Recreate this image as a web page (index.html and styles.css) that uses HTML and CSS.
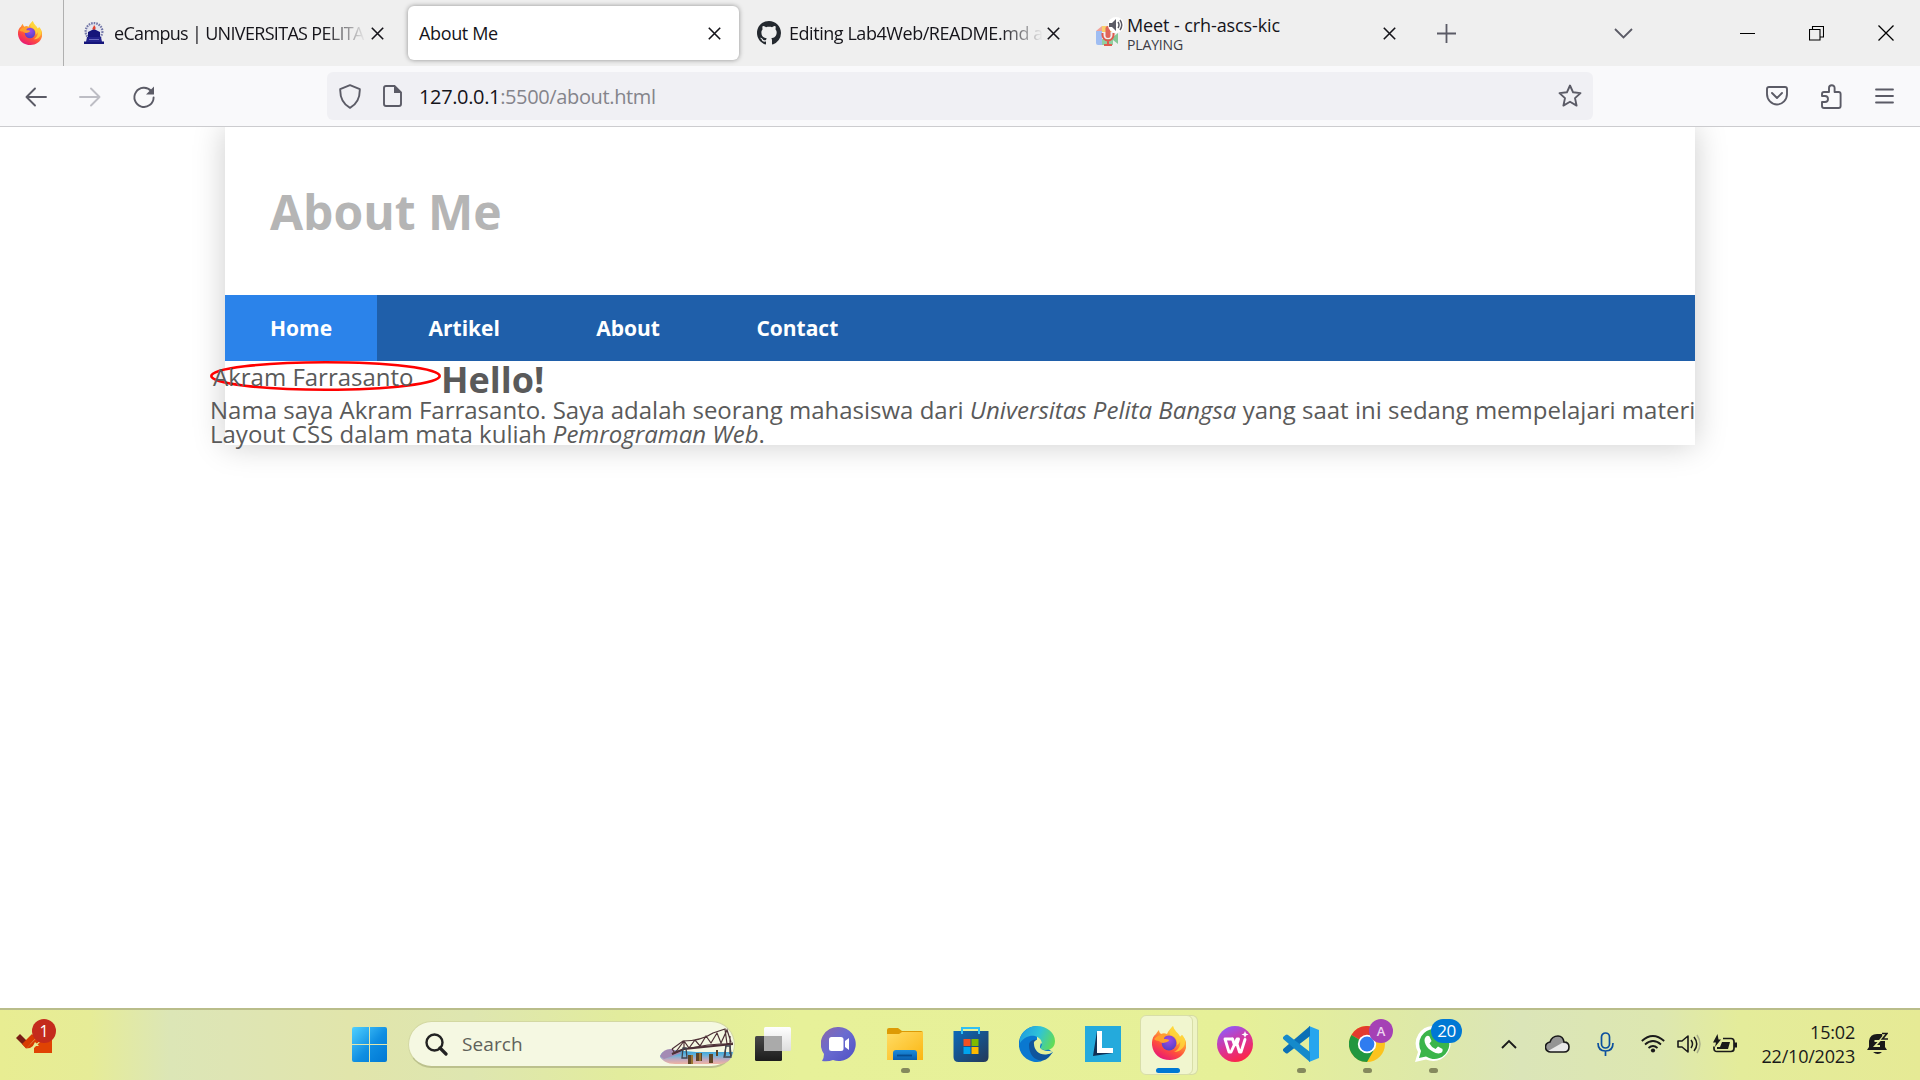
FILE: index.html
```html
<!DOCTYPE html>
<html lang="id">
<head>
<meta charset="utf-8">
<title>About Me</title>
<link rel="stylesheet" href="styles.css">
</head>
<body>
<svg width="0" height="0" class="defs" aria-hidden="true">
  <defs>
    <linearGradient id="ffBody" x1=".8" y1="0" x2=".25" y2="1"><stop offset="0" stop-color="#fff44f"/><stop offset=".35" stop-color="#ffa436"/><stop offset=".65" stop-color="#ff4f3c"/><stop offset="1" stop-color="#e6127c"/></linearGradient>
    <radialGradient id="ffGlobe" cx=".5" cy=".3" r=".8"><stop offset="0" stop-color="#a04be8"/><stop offset="1" stop-color="#4a3fc0"/></radialGradient>
    <symbol id="firefox" viewBox="0 0 34 34">
      <path d="M4 8C5 6 6 5 7 4c0 2 1 3 2 4 2-1 4-1 6 0C16 5 19 2 21 0c1 5 5 7 7 11l2-2c4 5 5 8 4 13-2 8-9 12-16 12C8 34 1 28 0 19-.3 14 1 10 4 8z" fill="url(#ffBody)"/>
      <circle cx="17" cy="17" r="7.400" fill="url(#ffGlobe)"/>
      <path d="M2 13c3-4 8-5 12-4-1 1-2 2-2 4 2 0 4 0 5 1 0 2-3 2-6 3-1 0-3-1-4-2-2 0-4-1-5-2z" fill="#ffa02c"/>
      <path d="M21 0c-3 3-4 6-3 9 5 1 8 5 7 10 2-1 3-3 3-4 1 5-2 9-6 11 7 0 12-6 11-12-1-3-2-4-3-5l-2 2c-1-4-6-6-7-11z" fill="#ffd83b" opacity=".8"/>
    </symbol>
    <symbol id="x" viewBox="0 0 13 13"><path d="M.8.8l11.4 11.4M12.2.8L.8 12.2" fill="none" stroke="#15141a" stroke-width="1.600"/></symbol>
    <linearGradient id="win" x1="0" y1="0" x2="1" y2="1"><stop offset="0" stop-color="#4fd0ff"/><stop offset=".55" stop-color="#0f8ee2"/><stop offset="1" stop-color="#0078d4"/></linearGradient>
    <linearGradient id="chat" x1="0" y1="0" x2="1" y2="1"><stop offset="0" stop-color="#8b67a8"/><stop offset=".45" stop-color="#6a6bd0"/><stop offset="1" stop-color="#4f50c4"/></linearGradient>
    <linearGradient id="folder" x1="0" y1="0" x2="1" y2="1"><stop offset="0" stop-color="#ffdc65"/><stop offset="1" stop-color="#fbb612"/></linearGradient>
    <linearGradient id="blue" x1="0" y1="0" x2="0" y2="1"><stop offset="0" stop-color="#1a8bdc"/><stop offset="1" stop-color="#0b5fae"/></linearGradient>
    <linearGradient id="store" x1="0" y1="0" x2="1" y2="1"><stop offset="0" stop-color="#0b6ab9"/><stop offset="1" stop-color="#253858"/></linearGradient>
    <linearGradient id="edgeTop" x1="0" y1=".3" x2="1" y2=".6"><stop offset="0" stop-color="#1f9ee0"/><stop offset=".5" stop-color="#2fc3d8"/><stop offset="1" stop-color="#62dc55"/></linearGradient>
    <linearGradient id="wps" x1=".2" y1="0" x2=".7" y2="1"><stop offset="0" stop-color="#8a5cff"/><stop offset=".5" stop-color="#d8349c"/><stop offset="1" stop-color="#ff2540"/></linearGradient>
    <linearGradient id="dark" x1="0" y1="0" x2="0" y2="1"><stop offset="0" stop-color="#484848"/><stop offset="1" stop-color="#1c1c1c"/></linearGradient>
    <linearGradient id="pane" x1="0" y1="0" x2="0" y2="1"><stop offset="0" stop-color="#fff"/><stop offset="1" stop-color="#dedede"/></linearGradient>
    <linearGradient id="river" x1="0" y1="0" x2="0" y2="1"><stop offset="0" stop-color="#2e9fd4"/><stop offset=".35" stop-color="#62b2dc"/><stop offset=".7" stop-color="#c5a9bd"/><stop offset="1" stop-color="#efb3a2"/></linearGradient>
  </defs>
</svg>

<header class="browser">
  <div class="tabbar">
    <div class="view-btn"><svg width="24" height="28"><use href="#firefox"/></svg></div>
    <div class="tab tab-campus">
      <svg width="22" height="22" viewBox="0 0 22 22"><circle cx="11" cy="9.500" r="8.400" fill="#e3e4ee" stroke="#7478a8" stroke-width="2.200" stroke-dasharray="1.600 1"/><path d="M5 10l6-3 6 3v6H5zM1 19.500h20V22H1z" fill="#15157a"/><path d="M4 15h14l1 5H3z" fill="#22228c"/><path d="M9.500 7.500C9 5.500 11 5 11 3c1.600 1.500 2 3 1.200 4.500z" fill="#e5402c"/><path d="M6 17.500h10" stroke="#6a6ac0"/></svg>
      <span class="tab-label faded">eCampus | UNIVERSITAS PELITA</span>
      <svg class="close" width="13" height="13"><use href="#x"/></svg>
    </div>
    <div class="tab tab-active">
      <span class="tab-label">About Me</span>
      <svg class="close" width="13" height="13"><use href="#x"/></svg>
    </div>
    <div class="tab tab-github">
      <svg width="24" height="24" viewBox="0 0 16 16"><path fill="#24292f" d="M8 0C3.580 0 0 3.580 0 8c0 3.540 2.290 6.530 5.470 7.590.4.070.55-.17.55-.38 0-.19-.01-.82-.01-1.490-2.010.37-2.530-.49-2.690-.94-.09-.23-.48-.94-.82-1.130-.28-.15-.68-.52-.01-.53.63-.01 1.080.58 1.230.82.72 1.210 1.870.87 2.330.66.07-.52.28-.87.51-1.070-1.780-.2-3.640-.89-3.640-3.950 0-.87.31-1.590.82-2.150-.08-.2-.36-1.020.08-2.120 0 0 .67-.21 2.200.82.64-.18 1.320-.27 2-.27s1.360.09 2 .27c1.530-1.040 2.200-.82 2.200-.82.44 1.100.16 1.920.08 2.120.51.56.82 1.270.82 2.150 0 3.070-1.870 3.750-3.650 3.950.29.25.54.73.54 1.480 0 1.070-.01 1.930-.01 2.200 0 .21.15.46.55.38A8.010 8.010 0 0 0 16 8c0-4.420-3.580-8-8-8z"/></svg>
      <span class="tab-label faded">Editing Lab4Web/README.md a</span>
      <svg class="close" width="13" height="13"><use href="#x"/></svg>
    </div>
    <div class="tab tab-meet">
      <svg width="28" height="34" viewBox="0 0 28 34"><path d="M0 15l6-5v8H0z" fill="#f0a198"/><path d="M6 10h11v6H6z" fill="#f8cf6c"/><path d="M0 15h6v14H2q-2 0-2-2z" fill="#9fbdf2"/><path d="M6 23h11v6H6z" fill="#91cf9f"/><path d="M17 21l5-4v11l-5-4z" fill="#84c796"/><path d="M6.500 17v2a5.500 5.500 0 0 0 11 0v-2M12 25v4M8 29h8" fill="none" stroke="#df5b4e" stroke-width="2"/><rect x="9.500" y="10" width="5" height="12" rx="2.500" fill="#e0655a"/><circle cx="20" cy="9" r="8" fill="#fff"/><path d="M13 7h3l4-4v12l-4-4h-3z" fill="#5b5b66"/><path d="M22 6q2 3 0 6M24 4q3.500 5 0 10" fill="none" stroke="#5b5b66" stroke-width="1.500"/></svg>
      <span class="tab-stack"><span class="tab-title">Meet - crh-ascs-kic</span><span class="playing">PLAYING</span></span>
      <svg class="close" width="13" height="13"><use href="#x"/></svg>
    </div>
    <svg class="new-tab" width="19" height="19" viewBox="0 0 19 19"><path d="M9.500 0v19M0 9.500h19" stroke="#5b5b66" stroke-width="1.800"/></svg>
    <svg class="all-tabs" width="19" height="11" viewBox="0 0 19 11"><path d="M1 1l8.500 8.500L18 1" fill="none" stroke="#5b5b66" stroke-width="1.800"/></svg>
    <div class="win-controls">
      <svg width="15" height="15"><path d="M0 7.500h15" stroke="#000"/></svg>
      <svg width="15" height="15"><path d="M.5 3.500h10.500v10.500H.5zM3.500 3.500V.5h11v10.500H11" fill="none" stroke="#000" stroke-width="1.100"/></svg>
      <svg width="16" height="16"><path d="M.5.5l15 15M15.500.5l-15 15" stroke="#000" stroke-width="1.300"/></svg>
    </div>
  </div>
  <div class="navbar">
    <div class="nav-buttons">
      <svg width="22" height="20" viewBox="0 0 22 20"><path d="M21 10H1.500M10 1.500L1.500 10l8.500 8.500" fill="none" stroke="#5b5b66" stroke-width="1.900" stroke-linecap="round" stroke-linejoin="round"/></svg>
      <svg width="22" height="20" viewBox="0 0 22 20"><path d="M1 10h19.500M12 1.500l8.500 8.500-8.500 8.500" fill="none" stroke="#bdbdc4" stroke-width="1.900" stroke-linecap="round" stroke-linejoin="round"/></svg>
      <svg width="24" height="24" viewBox="0 0 24 24"><path d="M19.200 6A9.600 9.600 0 1 0 21.600 12.500" fill="none" stroke="#5b5b66" stroke-width="1.900" stroke-linecap="round"/><path d="M22 1.500v8h-8z" fill="#5b5b66"/></svg>
    </div>
    <div class="urlbar">
      <svg width="22" height="25" viewBox="0 0 22 25"><path d="M11 1.200l9.800 4C21 14 18 20 11 23.800 4 20 1 14 1.200 5.200z" fill="none" stroke="#5b5b66" stroke-width="1.900" stroke-linejoin="round"/></svg>
      <svg class="page-icon" width="19" height="22" viewBox="0 0 19 22"><path d="M3 1h8.500L18 7.500V19q0 2-2 2H3q-2 0-2-2V3q0-2 2-2z" fill="none" stroke="#5b5b66" stroke-width="1.900"/><path d="M11 1v7h7z" fill="#5b5b66"/></svg>
      <span class="url"><b>127.0.0.1</b>:5500/about.html</span>
      <svg class="star" width="24" height="24" viewBox="0 0 24 24"><path d="M12 1.500l3.100 6.800 7.400.8-5.500 5 1.600 7.500-6.600-3.800-6.600 3.800L7 14.100l-5.500-5 7.400-.8z" fill="none" stroke="#5b5b66" stroke-width="1.900" stroke-linejoin="round"/></svg>
    </div>
    <div class="nav-tools">
      <svg width="22" height="20" viewBox="0 0 22 20"><path d="M3 1h16q2 0 2 2v5a10 10.500 0 0 1-20 0V3q0-2 2-2zM6 7l5 5 5-5" fill="none" stroke="#5b5b66" stroke-width="1.900" stroke-linecap="round" stroke-linejoin="round"/></svg>
      <svg width="21" height="25" viewBox="0 0 21 25"><path d="M8 8V4a2.800 2.800 0 0 1 5.600 0v4h4q2 0 2 2v12q0 2-2 2H3q-2 0-2-2v-4h3a3 3 0 0 0 0-6H1v-2q0-2 2-2z" fill="none" stroke="#5b5b66" stroke-width="1.900" stroke-linejoin="round"/></svg>
      <svg width="19" height="16" viewBox="0 0 19 16"><path d="M1 1.500h17M1 8h17M1 14.500h17" stroke="#5b5b66" stroke-width="1.800" stroke-linecap="round"/></svg>
    </div>
  </div>
</header>

<main class="viewport">
  <div class="container">
    <div class="site-head"><h1>About Me</h1></div>
    <nav class="site-nav"><a class="active">Home</a><a>Artikel</a><a>About</a><a>Contact</a></nav>
    <section class="about">
      <div class="intro">
        <div class="name"><svg width="231" height="30" viewBox="0 0 231 30"><ellipse cx="115.500" cy="15" rx="114.200" ry="13.700" fill="none" stroke="#f00" stroke-width="2.600"/></svg><span>Akram Farrasanto</span></div>
        <h2>Hello!</h2>
      </div>
      <p>Nama saya Akram Farrasanto. Saya adalah seorang mahasiswa dari <em>Universitas Pelita Bangsa</em> yang saat ini sedang mempelajari materi<br>Layout CSS dalam mata kuliah <em>Pemrograman Web</em>.</p>
    </section>
  </div>
</main>

<footer class="taskbar">
  <div class="widget">
    <svg width="36" height="22" viewBox="0 0 36 22"><path d="M0 6l4-4 10 10-4 4z" fill="#7a1d14"/><path d="M10 16.500L24 2.500l4 4L14 16z" fill="#d83b01"/><path d="M6 12l4 4.500L20 6l-4-4z" fill="#d83b01"/><path d="M18 2l7 7-7 7v5h18V4H22z" fill="#e04303"/><path d="M19 10l4 4h-6z" fill="#e6eb94"/></svg>
    <span class="badge badge-red">1</span>
  </div>
  <div class="start"><svg width="35" height="35"><path d="M2 0h15v17H0V2q0-2 2-2zM18 0h15q2 0 2 2v15H18zM0 18h17v17H2q-2 0-2-2zM18 18h17v15q0 2-2 2H18z" fill="url(#win)"/></svg></div>
  <div class="search">
    <svg width="23" height="23" viewBox="0 0 23 23"><circle cx="9.500" cy="9.500" r="8" fill="none" stroke="#222" stroke-width="2.400"/><path d="M15 15l6 6" stroke="#222" stroke-width="3.200" stroke-linecap="round"/></svg>
    <span>Search</span>
    <svg class="bridge" width="74" height="37" viewBox="0 0 74 37"><path d="M0 29C1 24 5 22 12 22l24 2h37c-1 7-6 12-13 12H15C7 36 3 33 0 29z" fill="url(#river)"/><path d="M0 28q4-8 12-7l10 4-18 6z" fill="#a38bb4"/><path d="M12 26l12-5 24-4 25-2M12 21l11-8q18 0 30-8L65 1l2 15M24 21v-8M12 21l3 4 9-12 5 7 6-8 5 6 6-10 5 7 6-10 4 10 6-13 4 12M70 8v18M66 16l-1 12M70 16l1 12" fill="none" stroke="#4d3036" stroke-width="1.200"/><path d="M12 26l12-5 49-5" fill="none" stroke="#4d3036" stroke-width="2"/><path d="M23 20l-1 10h5l-1-10zM66 18l-2 11h7l-1-11z" fill="none" stroke="#3f4550" stroke-width="1.300"/><path d="M28 27h5v9h-5zM36 25h6v8h-6zM49 26h4v9h-4zM56 22h2v6h-2z" fill="#5d4426"/><path d="M31 27h2v9h-2zM39 25h2v8h-2z" fill="#9a7433"/></svg>
  </div>
  <div class="apps">
    <div class="app"><svg width="36" height="36" viewBox="0 0 36 36"><rect x="0" y="10" width="27" height="25" rx="1.500" fill="url(#dark)"/><rect x="9" y="1" width="27" height="24" rx="1.500" fill="url(#pane)"/><path d="M9 10h18v15H9z" fill="#aaa"/></svg></div>
    <div class="app"><svg width="36" height="36" viewBox="0 0 36 36"><path d="M18 1a17 17 0 1 1-6 33Q7 36 1 35q2-3 2-7A17 17 0 0 1 18 1z" fill="url(#chat)"/><rect x="8" y="11" width="14.500" height="14" rx="2.500" fill="#fff"/><path d="M24 15l4-3v12l-4-3z" fill="#fff"/></svg></div>
    <div class="app open"><svg width="36" height="36" viewBox="0 0 36 36"><path d="M0 8V4q0-2 2-2h9l4 3h19q2 0 2 2v5H0z" fill="#dd9a05"/><path d="M0 8h12l3-2h21v28H0z" fill="url(#folder)"/><path d="M6 34v-7q0-3 3-3h18q3 0 3 3v7z" fill="url(#blue)"/><path d="M10 29.500h15" stroke="#064d91" stroke-width="1.800"/></svg></div>
    <div class="app"><svg width="36" height="36" viewBox="0 0 36 36"><path d="M9 8V2h17v6" fill="none" stroke="#2fc0f4" stroke-width="2"/><path d="M.5 5h35v26q0 5-5 5h-25q-5 0-5-5z" fill="url(#store)"/><path d="M9 5v3M26 5v3" stroke="#2fc0f4" stroke-width="2"/><path d="M10.500 13h7v7h-7z" fill="#f25022"/><path d="M18.500 13h7v7h-7z" fill="#7fba00"/><path d="M10.500 21h7v7h-7z" fill="#00a4ef"/><path d="M18.500 21h7v7h-7z" fill="#ffb900"/></svg></div>
    <div class="app"><svg width="36" height="36" viewBox="0 0 36 36"><path d="M18 0a18 18 0 1 0 4 35.500l12-9L18 14z" fill="#0a78d0"/><path d="M1 12C4 4 11 0 18 0c10 0 18 7 18 15 0 6-4 9-9 9-4 0-6-1-5-3 2-3 1-9-6-11C11 9 5 11 1 17z" fill="url(#edgeTop)"/><path d="M10 19c0 9 5 16 14 15.500 4-1 7-4 9-7.500-6 3-15 1-17-6-1-3 0-6 2-7-5-1-8 2-8 5z" fill="#10549c"/><path d="M15 18c-1-4 6-6 7-2 0 2-1 3-1 5 0 2 4 4 9 4q3 0 4 1-3 2-7 2.500C20 29 15 24 15 18z" fill="#e5ef99"/></svg></div>
    <div class="app"><svg width="36" height="36" viewBox="0 0 36 36"><path d="M0 0h36v36H0z" fill="#24aadc"/><path d="M12 5L8 30l4-3zM8 30l20-3H12z" fill="#123055"/><path d="M12 5h5v17h11v5H12z" fill="#fff"/></svg></div>
    <div class="app current"><svg width="34" height="34"><use href="#firefox"/></svg></div>
    <div class="app"><svg width="36" height="36" viewBox="0 0 36 36"><circle cx="18" cy="18" r="18" fill="url(#wps)"/><path d="M15 13H8l4 13h2l6-13h1.500l-1.500 5 2.500 8h1.500l4-12.500" fill="none" stroke="#fff" stroke-width="2.900" stroke-linecap="round" stroke-linejoin="round"/><path d="M15.500 13l2 6" stroke="#fff" stroke-width="2.900" stroke-linecap="round"/><path d="M28 5l1 2.500 2.500 1-2.500 1-1 2.500-1-2.500-2.500-1 2.500-1z" fill="#fff"/></svg></div>
    <div class="app open"><svg width="36" height="36" viewBox="0 0 36 36"><path d="M26 0l10 4v28l-10 4z" fill="#27a5ee"/><path d="M27 0v10L5 27q-1 1-2.500 0L.7 25.500q-1.500-1.500 0-3z" fill="#0b70b6"/><path d="M27 36V26L5 9Q4 8 2.500 9L.7 10.500q-1.500 1.500 0 3z" fill="#158acb"/></svg></div>
    <div class="app open"><svg width="36" height="36" viewBox="0 0 36 36"><circle cx="18" cy="18" r="18" fill="#fcc31e"/><path d="M18 18L2.400 9A18 18 0 0 1 33.600 9H18z" fill="#e33b2e"/><path d="M2.400 9A18 18 0 0 0 18 36l8-14-8-4z" fill="#21973f"/><circle cx="18" cy="18" r="9.200" fill="#fff"/><circle cx="18" cy="18" r="7.400" fill="#2f7cf0"/></svg><span class="badge badge-purple">A</span></div>
    <div class="app open"><svg width="36" height="36" viewBox="0 0 36 36"><path d="M19 0a17.500 17.500 0 1 1-8 33.500L0 36l3-10A17.500 17.500 0 0 1 19 0z" fill="#fff"/><path d="M19 3a15 15 0 1 1-8 27.500L4 32l2-7A15 15 0 0 1 19 3z" fill="#3bb54a"/><path d="M11 10.500q2-1.500 3.500 0l2 4.500-2 2.500q2 4 6 5.500l2.500-2.500 4.500 2.500q1 4-4 4.500C16 26.500 9.500 20 9.500 14q0-2 1.500-3.500z" fill="#fff"/></svg><span class="badge badge-blue">20</span></div>
  </div>
  <div class="tray">
    <svg class="t-chevron" width="16" height="10" viewBox="0 0 16 10"><path d="M1 9l7-7 7 7" fill="none" stroke="#1a1a1a" stroke-width="1.900"/></svg>
    <svg class="t-cloud" width="25" height="18" viewBox="0 0 25 18"><path d="M6 17a5 5 0 0 1-1-10Q7 1 13 1q5 0 6 6 5 0 5 5t-5 5z" fill="#959595"/><path d="M3 16l14-8q7 0 7 5-1 4-5 4H6z" fill="#e9e9e9"/><path d="M6 17a5 5 0 0 1-1-10Q7 1 13 1q5 0 6 6 5 0 5 5t-5 5z" fill="none" stroke="#181818" stroke-width="1.600"/></svg>
    <svg class="t-mic" width="17" height="24" viewBox="0 0 17 24"><rect x="4.500" y="1" width="8" height="15" rx="4" fill="none" stroke="#0b4f9e" stroke-width="1.700"/><path d="M1 11q0 8 7.500 8T16 11M8.500 19v5" fill="none" stroke="#0b4f9e" stroke-width="1.700"/></svg>
    <svg class="t-wifi" width="24" height="18" viewBox="0 0 24 18"><path d="M.8 6q11-10 22.400 0M4 9.500q8-7 16 0M7.500 13q4.500-4 9 0" fill="none" stroke="#1a1a1a" stroke-width="1.800"/><circle cx="12" cy="15.500" r="2.100" fill="#1a1a1a"/></svg>
    <svg class="t-sound" width="24" height="20" viewBox="0 0 24 20"><path d="M1 7h4l6-5v16l-6-5H1z" fill="none" stroke="#1a1a1a" stroke-width="1.600" stroke-linejoin="round"/><path d="M14 6q3 4 0 8M17 3q5.500 7 0 14" fill="none" stroke="#1a1a1a" stroke-width="1.500"/><path d="M20 1q6 9 0 18" fill="none" stroke="#aab08a" stroke-width="1.500"/></svg>
    <svg class="t-battery" width="24" height="20" viewBox="0 0 24 20"><path d="M10 4.500h8q3 0 3 3v7q0 3-3 3H4q-3 0-3-3v-2" fill="none" stroke="#1a1a1a" stroke-width="1.700"/><path d="M9 8h8l-2 7H4v-2h3zM21 8.500h3v5h-3zM4.500 0L0 8.500h3L2 13l6-7.500H5.500z" fill="#1a1a1a"/></svg>
    <div class="clock"><span>15:02</span><span>22/10/2023</span></div>
    <svg class="t-bell" width="21" height="24" viewBox="0 0 21 24"><path d="M0 18l2-3V9q1-7 8-7h5l3 6v7l2 3zM6 20h9q-4 4-9 0z" fill="#1a1a1a"/><path d="M7.500 9h5l-4.500 5h5" fill="none" stroke="#e3eb9b" stroke-width="1.800"/><path d="M15 1.500h5l-4.500 5.500H21" fill="none" stroke="#e5ec9a" stroke-width="4"/><path d="M15 1.500h5l-4.500 5.500H21" fill="none" stroke="#1a1a1a" stroke-width="1.700"/></svg>
  </div>
</footer>
</body>
</html>
```
FILE: styles.css
```css
* { box-sizing: border-box; margin: 0; padding: 0; }
body {
  width: 1920px;
  height: 1080px;
  overflow: hidden;
  display: flex;
  flex-direction: column;
  background: #fff;
  font-family: "Open Sans", "Noto Sans", sans-serif;
}
svg { display: block; flex: none; }
.defs { position: absolute; }

/* Browser chrome */
.browser { height: 127px; flex: none; background: #f9f9fb; border-bottom: 1px solid #cccccf; }
.tabbar { height: 66px; display: flex; align-items: center; background: #efefef; color: #15141a; }
.view-btn { width: 64px; height: 66px; display: flex; align-items: center; padding-left: 18px; border-right: 1px solid #b0b0b0; }
.tab { height: 54px; display: flex; align-items: center; flex: none; font-size: 18px; line-height: 26px; letter-spacing: -0.35px; white-space: nowrap; }
.close { margin-left: auto; }
.tab-campus { width: 344px; padding: 0 24px 0 19px; gap: 9px; letter-spacing: -0.68px; }
.tab-active { width: 331px; padding: 0 18px 0 11px; background: #fff; border-radius: 6px; box-shadow: 0 0 5px rgba(0, 0, 0, .4); }
.tab-github { width: 338px; padding: 0 18px; gap: 8px; letter-spacing: -0.45px; }
.tab-meet { width: 338px; padding: 0 19px; gap: 3px; letter-spacing: -0.1px; }
.faded { flex: 1; mask-image: linear-gradient(to left, transparent 0, #000 42px); }
.tab-campus .close, .tab-github .close { margin-left: -4px; }
.tab-stack { display: flex; flex-direction: column; }
.tab-title { line-height: 22px; }
.playing { font-size: 14px; line-height: 17px; letter-spacing: -0.15px; color: #3c3c44; }
.new-tab { margin-left: 22px; }
.all-tabs { margin-left: 158px; }
.win-controls { display: flex; align-items: center; margin-left: auto; padding-right: 26px; gap: 54px; }

.navbar { height: 60px; display: flex; align-items: center; }
.nav-buttons { width: 327px; padding: 1px 0 0 25px; display: flex; align-items: center; gap: 32px; }
.nav-buttons svg:last-child { margin-left: -1px; }
.urlbar { width: 1266px; height: 48px; border-radius: 6px; background: #f0f0f4; display: flex; align-items: center; padding: 0 11px 0 12px; }
.page-icon { margin-left: 22px; }
.url { margin-left: 17px; padding-top: 1px; font-size: 20px; letter-spacing: -0.36px; color: #84848b; }
.url b { font-weight: 400; color: #15141a; }
.star { margin-left: auto; }
.nav-tools { flex: 1; display: flex; align-items: center; justify-content: flex-end; gap: 33px; padding-right: 26px; }

/* Page */
.viewport { flex: 1; overflow: hidden; color: #5a5a5a; }
.container { width: 1470px; height: 318px; margin: 0 auto; background: #fff; box-shadow: 0 0 30px #ccc; }
.site-head { height: 168px; padding: 61px 45px 0; }
.site-head h1 { font-size: 48px; line-height: 48px; color: #b5b5b5; }
.site-nav { height: 66px; display: flex; gap: 6.4px; background: #1f5faa; }
.site-nav a { padding: 0 45px; font-size: 21px; line-height: 66px; font-weight: 700; color: #fff; }
.site-nav .active { background: #2b83ea; }
.about { margin-left: -15px; font-size: 24px; line-height: 24px; }
.intro { display: flex; height: 37px; }
.name { position: relative; width: 231px; }
.name span { position: absolute; left: 3px; top: 4px; white-space: nowrap; }
.intro h2 { padding-top: 1px; font-size: 36px; line-height: 36px; }
.about p { white-space: nowrap; }

/* Taskbar */
.taskbar {
  height: 72px;
  flex: none;
  display: flex;
  align-items: flex-start;
  border-top: 2px solid #b9bd8a;
  background: linear-gradient(90deg, #e8ed92 0, #e6ec97 90px, #dce6b6 170px, #dee5b4 230px, #e1e5ab 350px, #dee6b0 470px, #e2ec9d 620px, #e7f199 800px, #e6f098 1240px, #dee9a8 1420px, #dbe5b8 1520px, #dde7b0 1660px, #e4ec9a 1740px, #e6ea95 1920px);
}
.widget { position: relative; width: 352px; padding: 22px 0 0 16px; }
.badge { position: absolute; display: flex; align-items: center; justify-content: center; height: 24px; border-radius: 12px; color: #fff; font-size: 16px; line-height: 24px; }
.badge-red { left: 32px; top: 9px; width: 24px; background: #c42b1c; }
.start { width: 56px; padding-top: 17px; }
.search { width: 327px; height: 47px; margin-top: 11px; display: flex; align-items: center; padding: 0 0 0 16px; border-radius: 24px; border: 1px solid #d3d8a2; border-bottom: 2px solid #bcc18d; background: #f5f8e2; color: #60615a; font-size: 19px; }
.search span { margin-left: 14px; letter-spacing: 0.1px; }
.bridge { margin-left: auto; margin-top: 4px; }
.apps { display: flex; height: 70px; margin-left: 5px; }
.app { position: relative; width: 66px; padding: 16px 0 0 15px; }
.open::after { content: ""; position: absolute; left: 29px; top: 58px; width: 9px; height: 5px; border-radius: 3px; background: #85895d; }
.current::before { content: ""; position: absolute; left: 1px; top: 5px; width: 51px; height: 58px; border-radius: 6px; background: #f1f6cf; border: 1px solid #d8dea8; box-shadow: 5px 0 0 -1px #eef4c5, 5px 0 0 0 #d5dba4; }
.current svg { position: relative; left: -1px; }
.current::after { content: ""; position: absolute; left: 20px; top: 58px; width: 24px; height: 5px; border-radius: 3px; background: #0078d4; }
.current::before { left: 4px; }
.current svg { left: 1px; }
.badge-purple { left: 35px; top: 9px; width: 24px; background: #a541b5; font-size: 13px; font-weight: 600; color: #ecd3f0; }
.badge-blue { left: 31px; top: 9px; width: 31px; background: #0078d4; font-size: 17px; letter-spacing: -0.5px; }
.tray { display: flex; align-items: center; height: 70px; flex: 1; color: #1a1a1a; padding: 0 0 2px 35px; }
.t-cloud { margin-left: 28px; }
.t-mic { margin-left: 27px; }
.t-wifi { margin-left: 27px; }
.t-sound { margin-left: 12px; }
.t-battery { margin-left: 12px; }
.clock { width: 118px; display: flex; flex-direction: column; align-items: flex-end; font-size: 18px; line-height: 24px; letter-spacing: -0.2px; }
.t-bell { margin-left: 12px; }
```
